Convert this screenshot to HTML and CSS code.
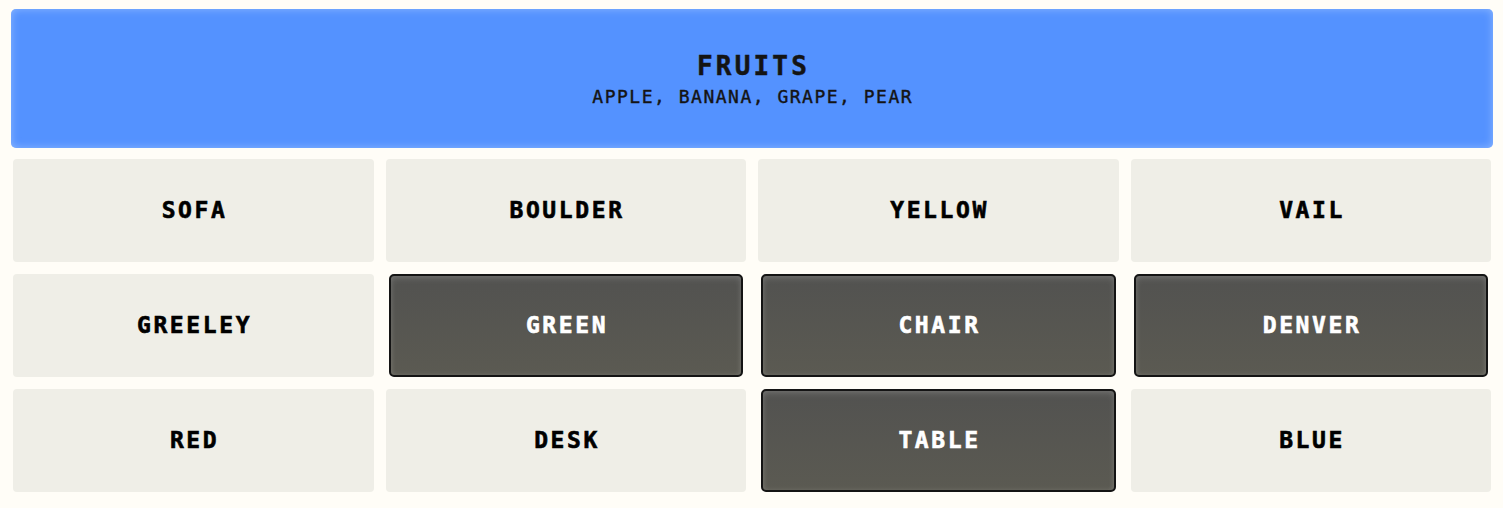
FILE: index.html
```html
<!DOCTYPE html>
<html lang="en">
<head>
<meta charset="utf-8">
<title>Connections</title>
<link rel="stylesheet" href="styles.css">
</head>
<body>
<main class="board">
  <section class="solved">
    <h2 class="solved-title">FRUITS</h2>
    <p class="solved-words">APPLE, BANANA, GRAPE, PEAR</p>
  </section>
  <div class="grid">
    <button class="tile">SOFA</button>
    <button class="tile">BOULDER</button>
    <button class="tile">YELLOW</button>
    <button class="tile">VAIL</button>
    <button class="tile">GREELEY</button>
    <button class="tile selected">GREEN</button>
    <button class="tile selected">CHAIR</button>
    <button class="tile selected">DENVER</button>
    <button class="tile">RED</button>
    <button class="tile">DESK</button>
    <button class="tile selected">TABLE</button>
    <button class="tile">BLUE</button>
  </div>
</main>
</body>
</html>
```

FILE: styles.css
```css
html, body {
  margin: 0;
  padding: 0;
  background: #fffdf7;
}

body {
  font-family: "DejaVu Sans Mono", "Liberation Mono", monospace;
}

.board {
  padding: 9px 10px 0 11px;
}

.solved {
  height: 139px;
  box-sizing: border-box;
  background: #5492ff;
  border-radius: 5px;
  box-shadow: inset 0 0 8px rgba(190, 215, 255, 0.55);
  display: flex;
  flex-direction: column;
  align-items: center;
  justify-content: center;
  padding-top: 1px;
}

.solved-title {
  margin: 0;
  padding-left: 3px;
  font-size: 26px;
  font-weight: bold;
  letter-spacing: 3.2px;
  line-height: 30px;
  color: #141414;
  -webkit-text-stroke: 0.5px #141414;
}

.solved-words {
  margin: 5px 0 0;
  padding-left: 1.5px;
  font-size: 18px;
  letter-spacing: 1.5px;
  line-height: 22px;
  color: #141414;
  -webkit-text-stroke: 0.4px #141414;
}

.grid {
  margin: 11px 2px 0;
  display: grid;
  grid-template-columns: repeat(4, 1fr);
  grid-auto-rows: 103px;
  gap: 12px;
}

.tile {
  border: none;
  border-radius: 4px;
  background: #efeee7;
  font-family: "DejaVu Sans Mono", "Liberation Mono", monospace;
  font-weight: bold;
  font-size: 23px;
  letter-spacing: 2.6px;
  color: #000;
  -webkit-text-stroke: 0.6px #000;
  padding: 0 0 1px 2.6px;
  cursor: pointer;
}

.tile.selected {
  margin: 0 3px;
  border: 2px solid #141414;
  border-radius: 5px;
  background: linear-gradient(#525250, #5b5a52);
  box-shadow: inset 0 3px 6px rgba(255, 255, 255, 0.12), inset 0 0 5px rgba(255, 255, 255, 0.1);
  color: #ffffff;
  -webkit-text-stroke: 0.6px #ffffff;
}
```
